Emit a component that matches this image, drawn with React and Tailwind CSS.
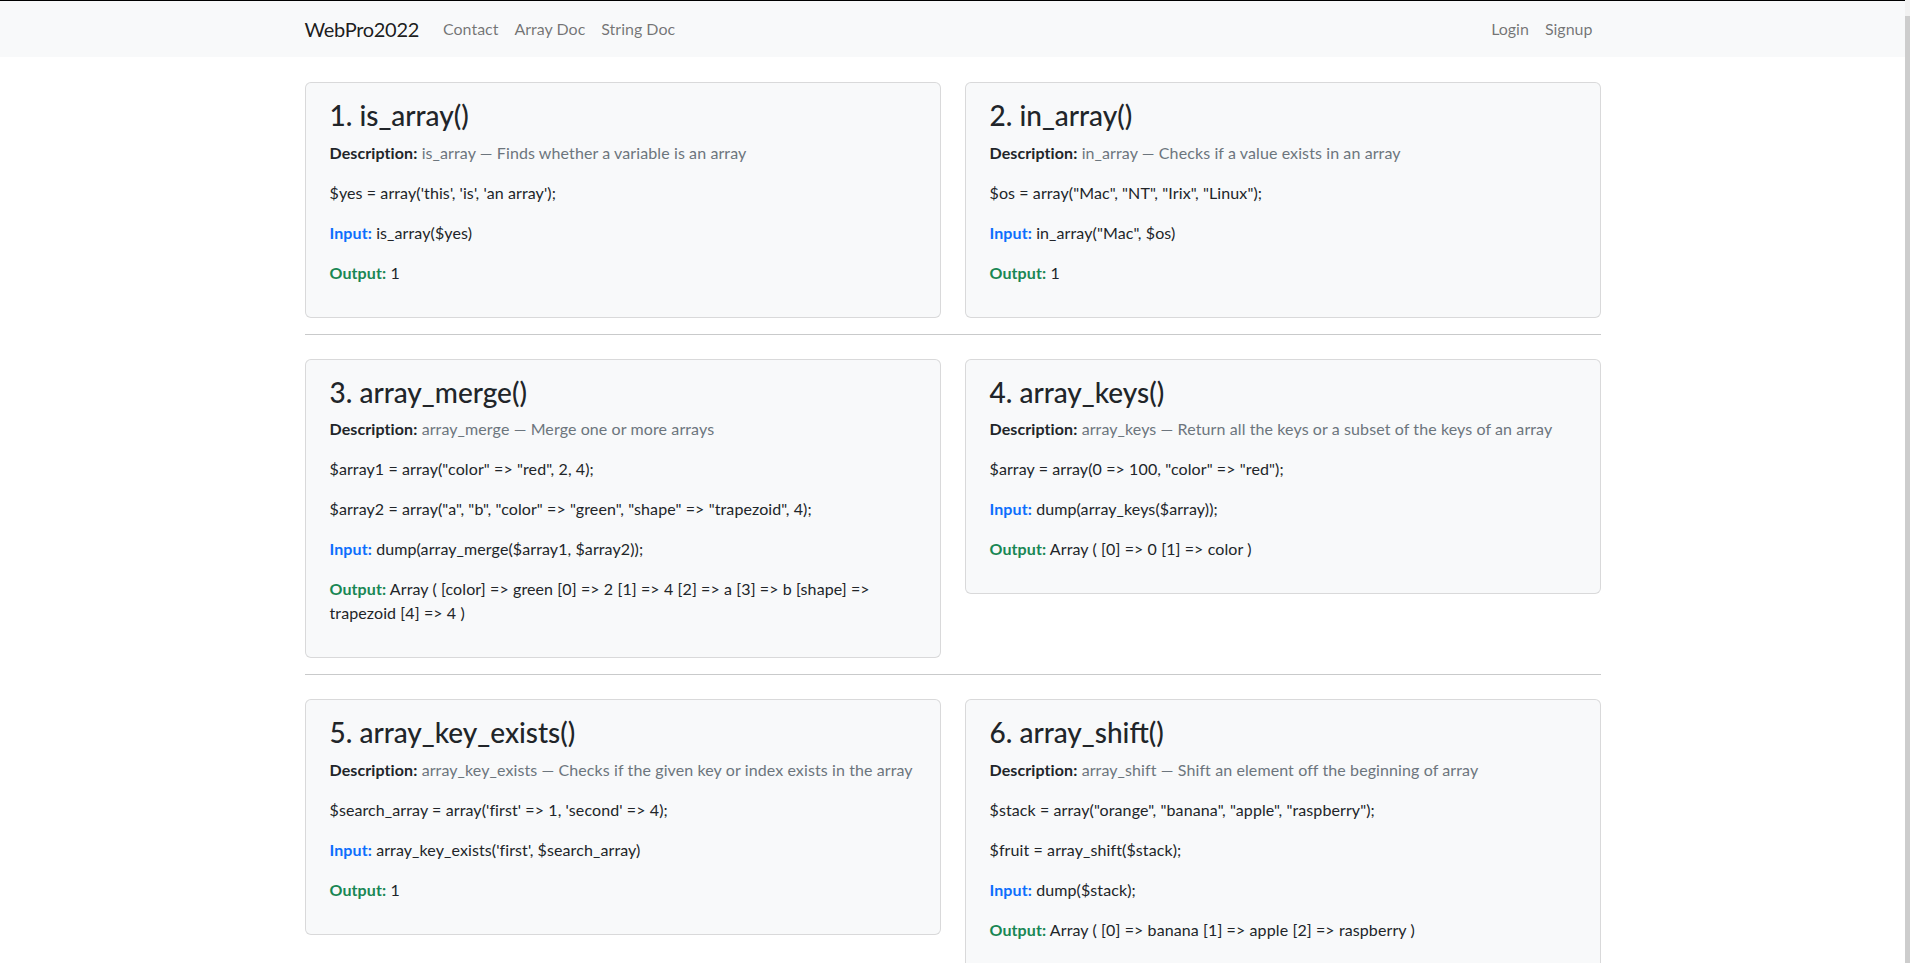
import React from 'react';

const font = { fontFamily: 'Lato, "Open Sans", "Liberation Sans", sans-serif' };

const docs = [
    [
        {
            title: '1. is_array()',
            name: 'is_array',
            desc: 'Finds whether a variable is an array',
            code: ["$yes = array('this', 'is', 'an array');"],
            input: 'is_array($yes)',
            output: '1',
        },
        {
            title: '2. in_array()',
            name: 'in_array',
            desc: 'Checks if a value exists in an array',
            code: ['$os = array("Mac", "NT", "Irix", "Linux");'],
            input: 'in_array("Mac", $os)',
            output: '1',
        },
    ],
    [
        {
            title: '3. array_merge()',
            name: 'array_merge',
            desc: 'Merge one or more arrays',
            code: [
                '$array1 = array("color" => "red", 2, 4);',
                '$array2 = array("a", "b", "color" => "green", "shape" => "trapezoid", 4);',
            ],
            input: 'dump(array_merge($array1, $array2));',
            output: 'Array ( [color] => green [0] => 2 [1] => 4 [2] => a [3] => b [shape] => trapezoid [4] => 4 )',
        },
        {
            title: '4. array_keys()',
            name: 'array_keys',
            desc: 'Return all the keys or a subset of the keys of an array',
            code: ['$array = array(0 => 100, "color" => "red");'],
            input: 'dump(array_keys($array));',
            output: 'Array ( [0] => 0 [1] => color )',
        },
    ],
    [
        {
            title: '5. array_key_exists()',
            name: 'array_key_exists',
            desc: 'Checks if the given key or index exists in the array',
            code: ["$search_array = array('first' => 1, 'second' => 4);"],
            input: "array_key_exists('first', $search_array)",
            output: '1',
        },
        {
            title: '6. array_shift()',
            name: 'array_shift',
            desc: 'Shift an element off the beginning of array',
            code: [
                '$stack = array("orange", "banana", "apple", "raspberry");',
                '$fruit = array_shift($stack);',
            ],
            input: 'dump($stack);',
            output: 'Array ( [0] => banana [1] => apple [2] => raspberry )',
        },
    ],
];

function DocCard({ doc }) {
    return (
        <div className="bg-[#f8f9fa] border border-black/[.125] rounded-[6px] px-6 py-4 tracking-[0.1px]">
            <h3 className="text-[28px] leading-[1.2] font-medium mb-2 tracking-normal">{doc.title}</h3>
            <p className="mb-4">
                <b className="font-bold">Description:</b>{' '}
                <span className="text-[#6c757d]">{doc.name} — {doc.desc}</span>
            </p>
            {doc.code.map((line) => (
                <p key={line} className="mb-4">{line}</p>
            ))}
            <p className="mb-4">
                <b className="font-bold text-[#0d6efd]">Input:</b> {doc.input}
            </p>
            <p className="mb-4">
                <b className="font-bold text-[#198754]">Output:</b> {doc.output}
            </p>
        </div>
    );
}

export default function App() {
    return (
        <div className="min-h-screen bg-white text-[#212529] text-base leading-normal border-t border-black" style={font}>
            <div className="mr-[5px]">
                <nav className="bg-[#f8f9fa] py-2">
                    <div className="w-[1320px] mx-auto px-3 flex items-center justify-between">
                        <div className="flex items-center">
                            <a className="text-xl py-[5px] mr-4 text-black/90 tracking-[-0.3px]">WebPro2022</a>
                            <ul className="flex">
                                <li><a className="block px-2 py-2 text-black/55">Contact</a></li>
                                <li><a className="block px-2 py-2 text-black/55">Array Doc</a></li>
                                <li><a className="block px-2 py-2 text-black/55">String Doc</a></li>
                            </ul>
                        </div>
                        <ul className="flex">
                            <li><a className="block px-2 py-2 text-black/55">Login</a></li>
                            <li><a className="block px-2 py-2 text-black/55">Signup</a></li>
                        </ul>
                    </div>
                </nav>

                <div className="w-[1320px] mx-auto px-3">
                    {docs.map((row, i) => (
                        <div key={i}>
                            {i > 0 && <hr className="mt-4 mb-0 border-t border-[#c9cacb]" />}
                            <div className={i > 0 ? 'grid grid-cols-2 gap-6 items-start pt-6' : 'grid grid-cols-2 gap-6 items-start pt-[25px]'}>
                                {row.map((doc) => (
                                    <DocCard key={doc.title} doc={doc} />
                                ))}
                            </div>
                        </div>
                    ))}
                </div>
            </div>
            <div className="fixed top-0 right-0 h-screen w-[5px] bg-[#cdcdcd] border-t-[16px] border-[#f1f1f1]" />
        </div>
    );
}
